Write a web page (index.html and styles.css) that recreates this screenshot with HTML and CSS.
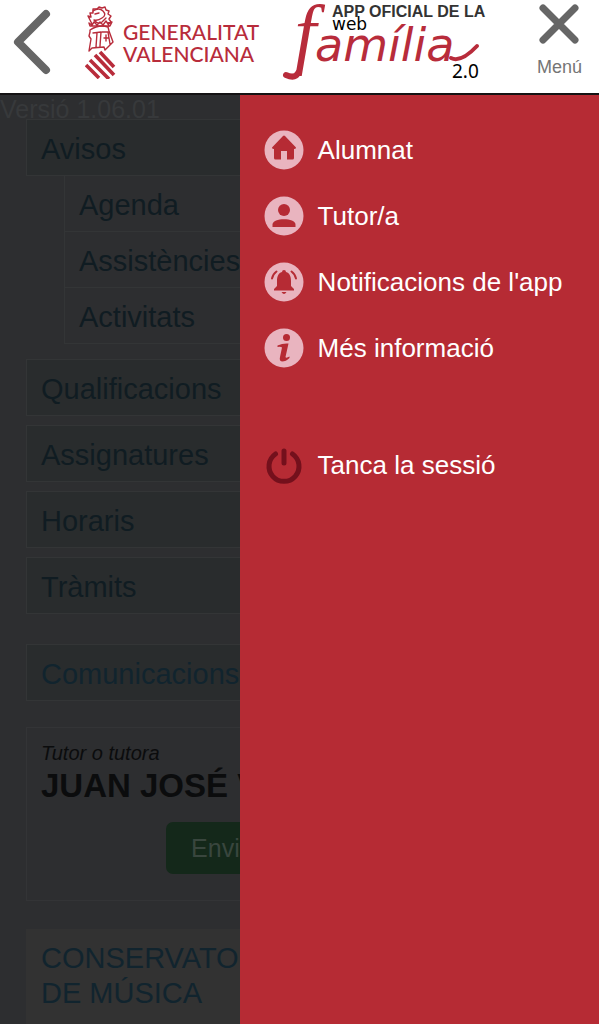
FILE: index.html
```html
<!DOCTYPE html>
<html lang="ca">
<head>
<meta charset="utf-8">
<meta name="viewport" content="width=device-width, initial-scale=1">
<title>Web Família 2.0</title>
<link rel="stylesheet" href="styles.css">
</head>
<body>
<header class="topbar">
  <button class="back" type="button" aria-label="Torna">
    <svg width="38" height="66" viewBox="0 0 38 66"><path d="M33 5 5 33 33 61" fill="none" stroke="#666" stroke-width="8" stroke-linecap="round" stroke-linejoin="round"/></svg>
  </button>
  <div class="brand">
    <svg class="crest" width="34" height="76" viewBox="0 0 34 76" aria-hidden="true">
      <g fill="none" stroke="#b82c3b" stroke-width="1.4" stroke-linejoin="round" stroke-linecap="round">
        <path d="M7 21 3 13l3 1-1-4 3 0 0-4 4 0 2-2 3 1 3-1 1 3 3 1-1 3 3 2-2 3 2 3-3 1 1 3"/>
        <path d="M8 8q6-4 10 0t-1 7q-4 3-8 2 4 5 8 2l4-4M10 11l4-1M4 20l3 2 2-3 3 3 3-3 3 3 3-4 2 3 4-2-2 4H5z"/>
        <path d="M5 29l-1 4 2 3-2 12 3-3 12-1 1 3 8-8-4-11-1-4q-9-3-18 3zM8 30l8-1-1 14M12 30l-1 14M17 29h6l2 12M19 35h4M21 32v6"/>
      </g>
      <path d="M15 49 29 64M10 52 29 72M5 57 24 76M1 62 14 75" fill="none" stroke="#b82c3b" stroke-width="3.6"/>
    </svg>
    <span class="brand-name">GENERALITAT<br>VALENCIANA</span>
  </div>
  <svg class="app-logo" width="206" height="84" viewBox="0 0 206 84" role="img" aria-label="App oficial de la web Família 2.0">
    <text class="logo-f" x="-2" y="56">&nbsp;f</text>
    <path class="logo-hook" d="M21 70Q18 76 9 72"/>
    <text class="logo-name" x="38" y="58">amília</text>
    <path class="logo-tail" d="M174 55Q184 60 200 43"/>
    <text class="logo-top" x="55" y="14">APP OFICIAL DE LA</text>
    <text class="logo-web" x="55" y="27">web</text>
    <text class="logo-version" x="175" y="75">2.0</text>
  </svg>
  <button class="menu-toggle" type="button">
    <svg width="42" height="42" viewBox="0 0 42 42" aria-hidden="true"><path d="M5 5 37 37M37 5 5 37" stroke="#666" stroke-width="7" stroke-linecap="round"/></svg>
    <span>Menú</span>
  </button>
</header>
<div class="stage">
  <main class="content">
    <p class="version">Versió 1.06.01</p>
    <nav class="sections">
      <div>
        <a class="item" href="#">Avisos</a>
        <div class="subitems">
          <a href="#">Agenda</a>
          <a href="#">Assistències</a>
          <a href="#">Activitats</a>
        </div>
      </div>
      <a class="item after-group" href="#">Qualificacions</a>
      <a class="item" href="#">Assignatures</a>
      <a class="item" href="#">Horaris</a>
      <a class="item" href="#">Tràmits</a>
      <a class="item messages" href="#">Comunicacions</a>
    </nav>
    <section class="tutor">
      <p class="role">Tutor o tutora</p>
      <h2>JUAN JOSÉ V</h2>
      <button class="send" type="button">Enviar comunicació</button>
    </section>
    <section class="school">CONSERVATORI PROFESSIONAL DE&nbsp;MÚSICA</section>
  </main>
  <nav class="drawer" aria-label="Menú">
    <a href="#"><svg viewBox="0 0 40 40" aria-hidden="true"><circle class="disc" cx="20" cy="20" r="19.5"/><path class="mark" d="M19 6Q20 5 21 6L32 17.500Q32 19 30 19V28Q30 29.500 28.500 29.500H23V21H17V29.500H11.500Q10 29.500 10 28V19Q8 19 8 17.500z"/></svg>Alumnat</a>
    <a href="#"><svg viewBox="0 0 40 40" aria-hidden="true"><circle class="disc" cx="20" cy="20" r="19.5"/><circle class="mark" cx="20" cy="14" r="6"/><path class="mark" d="M8.500 31V28.500C8.500 21.500 31.500 21.500 31.500 28.500V31z"/></svg>Tutor/a</a>
    <a href="#"><svg viewBox="0 0 40 40" aria-hidden="true"><circle class="disc" cx="20" cy="20" r="19.500"/><path class="mark" d="M18 10a2 2 0 0 1 4 0C26 11 27 15 27 19V24L30 27V28.500H10V27L13 24V19C13 15 14 11 18 10zM17.500 30H22.500Q20 34 17.500 30z"/><path class="wave" d="M8 16.500Q9 12 12.500 9.500M32 16.500Q31 12 27.500 9.500"/></svg>Notificacions de l'app</a>
    <a href="#"><svg viewBox="0 0 40 40" aria-hidden="true"><circle class="disc" cx="20" cy="20" r="19.500"/><circle class="mark" cx="22.500" cy="9.500" r="3.500"/><path class="mark" d="M13.500 17.500Q19 15 24.500 15.500L21.500 29Q22 30.500 25.500 28.500V30Q22 33.500 18 33.500Q15 33 16 29L18 19.500Q17 18.500 13.500 19z"/></svg>Més informació</a>
    <a class="logout" href="#"><svg viewBox="0 0 40 40" aria-hidden="true"><path class="power" d="M11.500 9A15 15 0 1 0 28.500 9M20 6V18"/></svg>Tanca la sessió</a>
  </nav>
</div>
</body>
</html>
```
FILE: styles.css
```css
* { box-sizing: border-box; }
body {
  margin: 0;
  height: 100vh;
  display: flex;
  flex-direction: column;
  overflow: hidden;
  font-family: "Liberation Sans", Arial, sans-serif;
  background: #2d2e30;
}
a { color: inherit; text-decoration: none; }
button { font: inherit; border: 0; padding: 0; background: none; }
p, h2 { margin: 0; }
svg { display: block; flex: none; }

.topbar {
  display: flex;
  align-items: flex-start;
  height: 95px;
  padding: 3px 17px 0 13px;
  background: #fff;
  border-bottom: 2px solid #151314;
}
.back { padding-top: 6px; }
.brand { display: flex; gap: 4px; margin-left: 34px; }
.brand-name {
  padding-top: 18px;
  font: 500 21px/22px Lato, sans-serif;
  color: #b82c3b;
}
.app-logo { margin-left: 18px; overflow: visible; }
.logo-f { font: italic 78px "Liberation Serif", serif; fill: #b82c3b; }
.logo-name { font: italic 46px "DejaVu Sans", cursive; fill: #b82c3b; }
.logo-tail { fill: none; stroke: #b82c3b; stroke-width: 4px; stroke-linecap: round; }
.logo-hook { fill: none; stroke: #b82c3b; stroke-width: 6px; stroke-linecap: round; }
.logo-top { font: bold 16px "Liberation Sans", sans-serif; fill: #333; }
.logo-web { font: 17px "DejaVu Sans", sans-serif; fill: #000; }
.logo-version { font: 19px "Noto Sans", sans-serif; fill: #000; }
.menu-toggle {
  display: flex;
  flex-direction: column;
  align-items: center;
  gap: 12px;
  margin-left: auto;
  font-size: 18px;
  line-height: 20px;
  color: #757575;
}

.stage { position: relative; flex: 1; min-height: 0; overflow: hidden; }
.content { color: #101c22; font-size: 29px; }
.version { padding-top: 4px; font-size: 25px; line-height: 20px; color: #37393b; }
.sections { display: flex; flex-direction: column; gap: 9px; margin: 0 26px; }
.item {
  display: block;
  padding: 3px 14px 0;
  line-height: 52px;
  background: #292c2d;
  border: 1px solid #333536;
}
.subitems { margin-left: 38px; border: 1px solid #333536; border-top: 0; }
.subitems a { display: block; padding: 3px 14px 0; line-height: 52px; }
.subitems a + a { border-top: 1px solid #333536; }
.after-group { margin-top: 6px; }
.messages { margin-top: 21px; color: #11242e; }
.tutor {
  margin: 26px 26px 0;
  padding: 12px 14px 26px;
  border: 1px solid #333436;
  color: #0b0c0d;
}
.role { font-size: 20px; line-height: 26px; font-style: italic; }
.tutor h2 { font-size: 33px; line-height: 40px; }
.send {
  display: block;
  margin: 16px auto 0;
  padding: 0 25px;
  border-radius: 7px;
  background: #14281a;
  color: #39463e;
  font-size: 25px;
  line-height: 52px;
}
.school {
  margin: 28px 26px 0;
  padding: 12px 15px 40px;
  line-height: 35px;
  background: #323232;
  color: #11242e;
}

.drawer {
  position: absolute;
  top: 0;
  right: 0;
  bottom: 0;
  width: 60%;
  padding: 22px 24px;
  background: #b62b34;
  color: #fff;
  font-size: 26px;
}
.drawer a { display: flex; align-items: center; gap: 14px; height: 66px; white-space: nowrap; }
.drawer svg { width: 40px; height: 40px; }
.drawer .logout { margin-top: 51px; }
.disc { fill: #e9b4bf; }
.mark { fill: #b62b34; }
.wave { fill: none; stroke: #b62b34; stroke-width: 2; stroke-linecap: round; }
.power { fill: none; stroke: #74101c; stroke-width: 5; stroke-linecap: round; }
```
